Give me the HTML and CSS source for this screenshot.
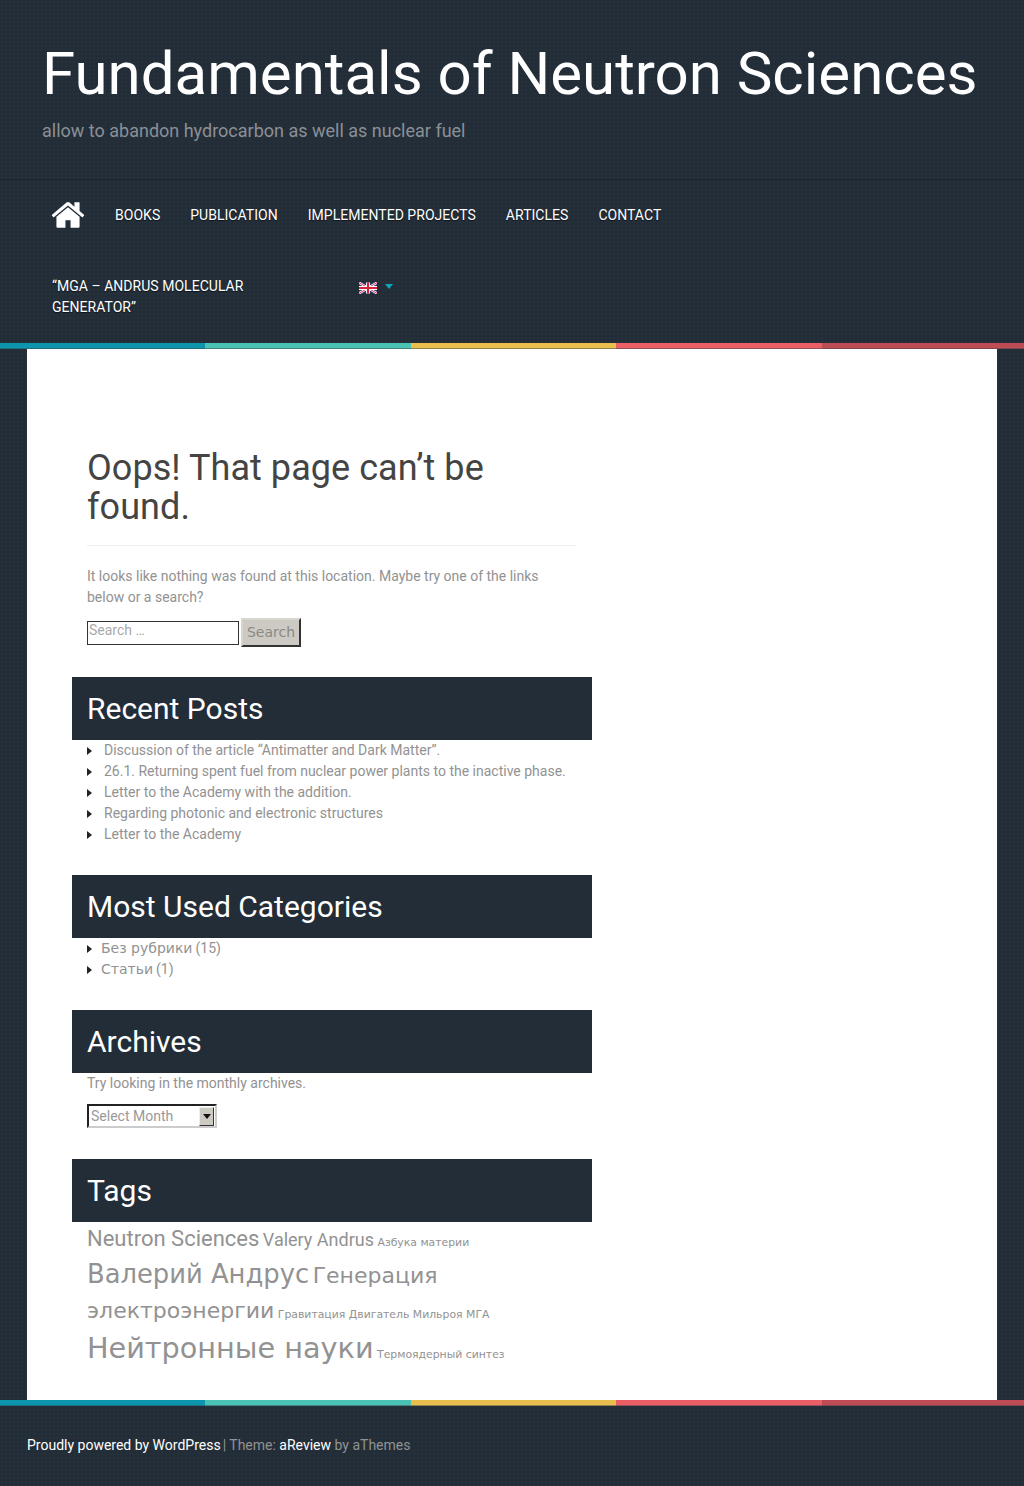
FILE: index.html
```html
<!DOCTYPE html>
<html lang="en">

<head>
    <meta charset="UTF-8">
    <meta name="viewport" content="width=device-width, initial-scale=1.0">
    <title>Page not found - Fundamentals of Neutron Sciences</title>
    <link rel="stylesheet" href="styles.css">
</head>

<body>

    <header class="site-header">
        <div class="branding">
            <h1 class="site-title">Fundamentals of Neutron Sciences</h1>
            <p class="site-desc">allow to abandon hydrocarbon as well as nuclear fuel</p>
        </div>
        <nav class="main-nav">
            <ul class="menu">
                <li class="menu-home"><a href="#" aria-label="Home">
                    <svg class="home-icon" viewBox="0 0 1792 1792" aria-hidden="true"><path d="M1472 992v480q0 26-19 45t-45 19h-384v-384h-256v384h-384q-26 0-45-19t-19-45v-480q0-1 .5-3t.5-3l575-474 575 474q1 2 1 6zm223-69l-62 74q-8 9-21 11h-3q-13 0-21-7l-692-577-692 577q-12 8-24 7-13-2-21-11l-62-74q-8-10-7-23.5t11-21.5l719-599q32-26 76-26t76 26l244 204v-195q0-14 9-23t23-9h192q14 0 23 9t9 23v408l219 182q10 8 11 21.5t-7 23.5z"/></svg>
                </a></li>
                <li><a href="#">Books</a></li>
                <li><a href="#">Publication</a></li>
                <li><a href="#">Implemented projects</a></li>
                <li><a href="#">Articles</a></li>
                <li><a href="#">Contact</a></li>
                <li class="menu-break"></li>
                <li class="menu-wide"><a href="#">“MGA – Andrus Molecular Generator”</a></li>
                <li class="menu-lang"><a href="#" aria-label="English">
                    <svg class="flag" viewBox="0 0 60 36" aria-hidden="true">
                        <rect width="60" height="36" fill="#2b2f6e"/>
                        <path d="M0 0L60 36M60 0L0 36" stroke="#fff" stroke-width="8"/>
                        <path d="M0 0L60 36M60 0L0 36" stroke="#d3223c" stroke-width="3"/>
                        <path d="M30 0V36M0 18H60" stroke="#fff" stroke-width="13"/>
                        <path d="M30 0V36M0 18H60" stroke="#d3223c" stroke-width="7"/>
                    </svg>
                    <span class="caret"></span>
                </a></li>
            </ul>
        </nav>
    </header>
    <div class="color-bar"><span></span><span></span><span></span><span></span><span></span></div>

    <main class="page-wrap">
        <div class="content-area">
            <header class="page-header">
                <h2 class="page-title">Oops! That page can’t be found.</h2>
            </header>
            <p class="intro">It looks like nothing was found at this location. Maybe try one of the links below or a search?</p>
            <form class="search-form">
                <input type="search" class="search-field" placeholder="Search …">
                <button type="button" class="search-submit">Search</button>
            </form>

            <section class="widget">
                <h3 class="widget-title">Recent Posts</h3>
                <ul class="arrow-list">
                    <li><a href="#">Discussion of the article “Antimatter and Dark Matter”.</a></li>
                    <li><a href="#">26.1. Returning spent fuel from nuclear power plants to the inactive phase.</a></li>
                    <li><a href="#">Letter to the Academy with the addition.</a></li>
                    <li><a href="#">Regarding photonic and electronic structures</a></li>
                    <li><a href="#">Letter to the Academy</a></li>
                </ul>
            </section>

            <section class="widget">
                <h3 class="widget-title">Most Used Categories</h3>
                <ul class="arrow-list cat-list">
                    <li><a href="#" class="cyr">Без рубрики</a> (15)</li>
                    <li><a href="#" class="cyr">Статьи</a> (1)</li>
                </ul>
            </section>

            <section class="widget">
                <h3 class="widget-title">Archives</h3>
                <p class="archive-note">Try looking in the monthly archives.</p>
                <div class="month-select">
                    <span class="month-label">Select Month</span>
                    <span class="month-arrow"></span>
                </div>
            </section>

            <section class="widget widget-tags">
                <h3 class="widget-title">Tags</h3>
                <div class="tagcloud">
                    <a href="#" class="tag-l">Neutron Sciences</a>
                    <a href="#" class="tag-m">Valery Andrus</a>
                    <a href="#" class="cyr tag-s">Азбука материи</a>
                    <a href="#" class="cyr tag-xl">Валерий Андрус</a>
                    <a href="#" class="cyr tag-lg">Генерация электроэнергии</a>
                    <a href="#" class="cyr tag-s">Гравитация</a>
                    <a href="#" class="cyr tag-s">Двигатель Мильроя</a>
                    <a href="#" class="cyr tag-s">МГА</a>
                    <a href="#" class="cyr tag-xxl">Нейтронные науки</a>
                    <a href="#" class="cyr tag-s">Термоядерный синтез</a>
                </div>
            </section>
        </div>
    </main>

    <div class="color-bar"><span></span><span></span><span></span><span></span><span></span></div>
    <footer class="site-footer">
        <a href="#">Proudly powered by WordPress</a><span class="sep">|</span> Theme: <a href="#">aReview</a> by aThemes
    </footer>

</body>

</html>
```

FILE: styles.css
```css
* {
  box-sizing: border-box;
}
body {
  margin: 0;
  font-family: Roboto, Arial, sans-serif;
  font-size: 14px;
  line-height: 21px;
  color: #929292;
  background-color: #222d38;
  background-image: radial-gradient(rgba(255, 255, 255, 0.02) 1px, transparent 1px);
  background-size: 4px 4px;
}
a {
  color: inherit;
  text-decoration: none;
}
ul {
  list-style: none;
  margin: 0;
  padding: 0;
}
.cyr {
  font-family: "DejaVu Sans", sans-serif;
}

/* header */
.branding {
  height: 180px;
  padding: 40px 42px 0;
  border-bottom: 1px solid #1b242d;
}
.site-title {
  margin: 0;
  font-size: 60px;
  line-height: 68px;
  font-weight: 400;
  color: #fff;
}
.site-desc {
  margin: 12px 0 0;
  font-size: 18px;
  line-height: 21px;
  color: #8b9096;
}
.main-nav {
  height: 163px;
  padding: 0 37px;
}
.menu {
  display: flex;
  flex-wrap: wrap;
  color: #fff;
  text-transform: uppercase;
  letter-spacing: 0.03px;
  text-shadow: 0 1px 1px rgba(0, 0, 0, 0.6);
}
.menu li {
  padding: 25px 15px 24px;
}
.menu .menu-home {
  padding: 17px 14px 0 13px;
  height: 70px;
}
.home-icon {
  display: block;
  width: 36px;
  height: 36px;
  fill: #fff;
}
.menu .menu-break {
  flex-basis: 100%;
  height: 0;
  padding: 0;
}
.menu .menu-wide {
  width: 307px;
  padding-top: 26px;
}
.menu .menu-lang {
  padding-top: 27px;
}
.menu-lang a {
  display: flex;
  align-items: center;
  gap: 8px;
  height: 21px;
}
.flag {
  width: 18px;
  height: 12px;
}
.caret {
  border-top: 5px solid #0fa5b8;
  border-left: 4px solid transparent;
  border-right: 4px solid transparent;
  margin-bottom: 3px;
}
.color-bar {
  display: flex;
  height: 6px;
}
.color-bar span {
  width: 205.4px;
  border-bottom: 1px solid rgba(60, 70, 75, 0.5);
}
.color-bar span:nth-child(1) {
  background-color: #0b96ae;
}
.color-bar span:nth-child(2) {
  background-color: #4ac3b5;
}
.color-bar span:nth-child(3) {
  background-color: #e8bf4d;
}
.color-bar span:nth-child(4) {
  background-color: #ea5f66;
}
.color-bar span:nth-child(5) {
  flex: 1;
  background-color: #bf4c55;
}

/* content */
.page-wrap {
  width: 970px;
  height: 1051px;
  margin: 0 auto;
  background-color: #fff;
}
.content-area {
  width: 520px;
  margin-left: 45px;
  padding: 100px 15px 0;
}
.page-header {
  margin-right: 1px;
  padding-bottom: 18px;
  border-bottom: 1px solid #eee;
}
.page-title {
  margin: 0;
  width: 470px;
  font-size: 36px;
  line-height: 39px;
  font-weight: 400;
  letter-spacing: 0.06px;
  color: #444;
}
.intro {
  margin: 20px 0 0;
  width: 480px;
}
.search-form {
  display: flex;
  align-items: center;
  gap: 2px;
  margin-top: 10px;
}
.search-field {
  width: 152px;
  height: 24px;
  padding: 0 1px 5px;
  border: 1px solid #333;
  font-family: Roboto, sans-serif;
  font-size: 14px;
  background: #fff;
}
.search-field::placeholder {
  color: #aaa;
}
.search-submit {
  width: 60px;
  height: 29px;
  padding: 0 0 2px;
  border: 2px solid;
  border-color: #d8d5cf #333 #333 #d8d5cf;
  background-color: #cdc9c3;
  color: #8a8a86;
  font-family: "DejaVu Sans", sans-serif;
  font-size: 14px;
}
.widget {
  margin: 30px -15px 0;
}
.widget-title {
  margin: 0;
  height: 63px;
  padding: 0 15px;
  font-size: 30px;
  line-height: 63px;
  font-weight: 400;
  color: #fff;
  background-color: #222d38;
}
.arrow-list,
.archive-note,
.month-select,
.tagcloud {
  margin-left: 15px;
  margin-right: 15px;
}
.arrow-list li {
  display: flex;
  align-items: center;
}
.arrow-list li::before {
  content: "";
  flex: none;
  border-left: 5px solid #222;
  border-top: 4px solid transparent;
  border-bottom: 4px solid transparent;
  margin-right: 12px;
}
.arrow-list a {
  margin-right: 3px;
}
.cat-list li::before {
  margin-right: 9px;
}
.archive-note {
  margin-top: 0;
  margin-bottom: 10px;
}
.month-select {
  display: flex;
  align-items: center;
  width: 130px;
  height: 24px;
  padding: 0 1px 0 2px;
  border: 2px solid;
  border-color: #222 #ccc #ccc #222;
  color: #999;
}
.month-label {
  flex: 1;
}
.month-arrow {
  position: relative;
  width: 15px;
  height: 19px;
  background-color: #cdc9c3;
  border: 1px solid;
  border-color: #eee #333 #333 #eee;
}
.month-arrow::after {
  content: "";
  position: absolute;
  top: 6px;
  left: 3px;
  border-top: 5px solid #111;
  border-left: 4px solid transparent;
  border-right: 4px solid transparent;
}
.widget-tags {
  margin-top: 31px;
}
.tagcloud a {
  line-height: 1.5;
}
.tag-s {
  font-size: 10.85px;
}
.tag-m {
  font-size: 18px;
}
.tag-l {
  font-size: 22px;
}
.tag-lg {
  font-size: 22px;
}
.tag-xl {
  font-size: 25.8px;
}
.tag-xxl {
  font-size: 28.7px;
}

/* footer */
.site-footer {
  height: 81px;
  padding: 29px 27px 0;
  color: #929292;
}
.site-footer a {
  color: #fff;
}
.sep {
  margin-left: 2px;
}
```
